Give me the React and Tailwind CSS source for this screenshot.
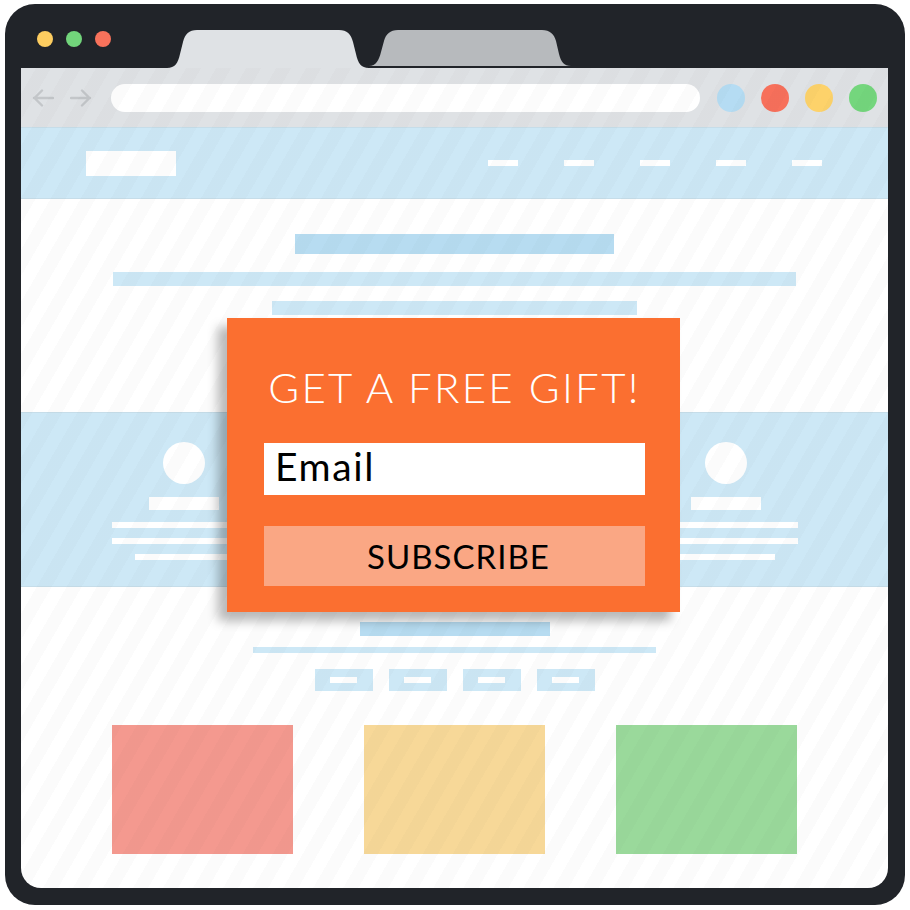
import React from 'react'

const Arrow = ({ flip }) => (
  <svg width="22" height="18" viewBox="0 0 22 18" className={flip ? 'rotate-180' : ''}>
    <path d="M21 9H2M10 1.5L2.5 9l7.5 7.5" fill="none" stroke="#c3c6c9" strokeWidth="2.4" strokeLinecap="round" strokeLinejoin="round" />
  </svg>
)

const Tabs = () => (
  <svg width="404" height="38" viewBox="0 0 404 38" className="ml-[56px] shrink-0">
    <path d="M0 38C8 38 11 33 13 24L16 12C18 4 22 0 30 0L172 0C180 0 184 4 186 12L189 24C191 33 194 38 202 38Z" fill="#dfe2e5" />
    <path d="M202 36C209 36 212 30 214 22L217 11C219 4 223 0 231 0L375 0C383 0 387 4 389 11L392 24C394 32 397 36 404 36Z" fill="#b7babd" />
  </svg>
)

const Profile = () => (
  <div className="flex w-[144px] flex-col items-center pt-[29px]">
    <div className="h-[42px] w-[42px] rounded-full bg-white" />
    <div className="mt-[13px] h-[13px] w-[70px] bg-white" />
    <div className="mt-[12px] h-[6px] w-[144px] bg-white" />
    <div className="mt-[10px] h-[6px] w-[144px] bg-white" />
    <div className="mt-[10px] h-[6px] w-[98px] bg-white" />
  </div>
)

export default function App() {
  return (
    <div className="h-[910px] w-[910px] bg-white pl-[5px] pt-[4px]" style={{ fontFamily: 'Lato, "Open Sans", sans-serif' }}>
      <div className="flex h-[901px] w-[900px] flex-col rounded-[30px] bg-[#212429] px-[16px] pb-[17px] pr-[17px]">
        {/* window top */}
        <div className="-mx-[16px] flex h-[64px] items-end">
          <div className="mb-[21px] ml-[32px] flex gap-[13px]">
            <span className="h-[16px] w-[16px] rounded-full bg-[#fdcd60]" />
            <span className="h-[16px] w-[16px] rounded-full bg-[#72d57b]" />
            <span className="h-[16px] w-[16px] rounded-full bg-[#f8725b]" />
          </div>
          <Tabs />
        </div>

        {/* page */}
        <div className="relative flex-1 overflow-hidden rounded-b-[20px] bg-white">
          <div className="flex h-[59px] items-center bg-[#dfe2e5] pl-[11px] pr-[11px]">
            <Arrow />
            <div className="ml-[16px]"><Arrow flip /></div>
            <div className="ml-[19px] h-[28px] w-[589px] rounded-full bg-white" />
            <div className="ml-[17px] flex gap-[16px]">
              <span className="h-[28px] w-[28px] rounded-full bg-[#b5dcf3]" />
              <span className="h-[28px] w-[28px] rounded-full bg-[#f7705b]" />
              <span className="h-[28px] w-[28px] rounded-full bg-[#fdd26a]" />
              <span className="h-[28px] w-[28px] rounded-full bg-[#74d67d]" />
            </div>
          </div>

          <div className="flex h-[72px] items-center justify-between border-y border-[#c6dde9] bg-[#cde8f6] pl-[65px] pr-[66px]">
            <div className="h-[25px] w-[90px] bg-white" />
            <div className="flex gap-[46px]">
              <span className="h-[6px] w-[30px] bg-white" />
              <span className="h-[6px] w-[30px] bg-white" />
              <span className="h-[6px] w-[30px] bg-white" />
              <span className="h-[6px] w-[30px] bg-white" />
              <span className="h-[6px] w-[30px] bg-white" />
            </div>
          </div>

          <div className="flex flex-col items-center pt-[35px]">
            <div className="h-[20px] w-[319px] bg-[#b7dcf1]" />
            <div className="mt-[18px] h-[14px] w-[683px] bg-[#cde8f6]" />
            <div className="mt-[15px] h-[14px] w-[365px] bg-[#cde8f6]" />
          </div>

          <div className="mt-[97px] flex h-[175px] justify-center gap-[127px] border-y border-[#c6dde9] bg-[#cde8f6]">
            <Profile />
            <Profile />
            <Profile />
          </div>

          <div className="flex flex-col items-center pt-[35px]">
            <div className="h-[14px] w-[190px] bg-[#b7dcf1]" />
            <div className="mt-[11px] h-[6px] w-[403px] bg-[#cde8f6]" />
            <div className="mt-[16px] flex gap-[16px]">
              {[0, 1, 2, 3].map((i) => (
                <div key={i} className="flex h-[22px] w-[58px] items-center justify-center bg-[#cde8f6]">
                  <span className="h-[6px] w-[27px] bg-white" />
                </div>
              ))}
            </div>
            <div className="mt-[34px] flex gap-[71px]">
              <div className="h-[129px] w-[181px] bg-[#f4998f]" />
              <div className="h-[129px] w-[181px] bg-[#f7d898]" />
              <div className="h-[129px] w-[181px] bg-[#9ad99b]" />
            </div>
          </div>

          {/* diagonal stripes over the mock page */}
          <div className="pointer-events-none absolute inset-0 bg-[image:repeating-linear-gradient(120deg,transparent_0px,transparent_13px,rgba(0,0,0,0.016)_13px,rgba(0,0,0,0.016)_26px)]" />

          {/* popup */}
          <div className="absolute left-[206px] top-[250px] z-10 flex h-[294px] w-[453px] flex-col bg-[#fb6f30] pl-[37px] pr-[35px] pt-[44px] shadow-[-9px_9px_10px_rgba(0,0,0,0.28)]">
            <h2 className="text-center text-[42px] font-light leading-[50px] tracking-[2.3px] text-white">
              GET A FREE GIFT!
            </h2>
            <div className="mt-[31px] h-[52px] bg-white pl-[11px] pt-[4px] text-[39px] leading-[39px] tracking-[1.6px] text-black">
              Email
            </div>
            <button className="mt-[31px] h-[60px] bg-[#faa784] pl-[8px] text-center text-[33px] leading-[56px] tracking-[1px] text-black">
              SUBSCRIBE
            </button>
          </div>
        </div>
      </div>
    </div>
  )
}
